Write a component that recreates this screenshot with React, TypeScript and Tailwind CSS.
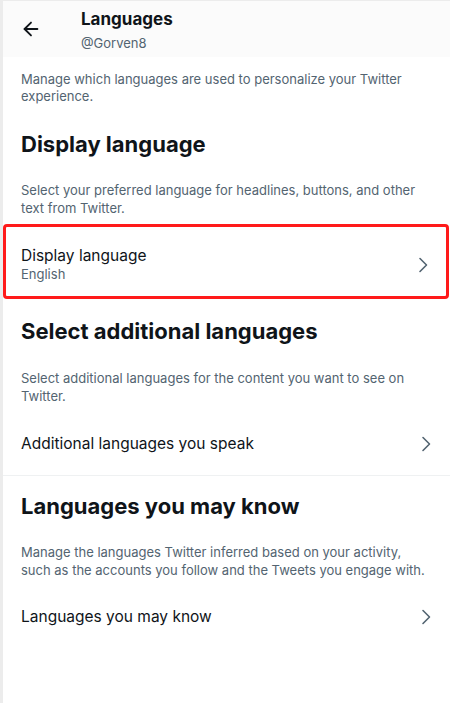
import { ArrowLeft } from "lucide-react";

function Chevron() {
  return (
    <svg width="10" height="16" viewBox="0 0 10 16" fill="none" className="text-[#536471] mr-[1px]">
      <path d="M2 1.5 L8.5 8 L2 14.5" stroke="currentColor" strokeWidth="1.6" strokeLinecap="round" strokeLinejoin="round" />
    </svg>
  );
}

function Row({ title, sub }: { title: string; sub?: string }) {
  return (
    <div className="flex items-center justify-between">
      <div className="flex flex-col">
        <span className="text-[15.5px] leading-[20px] text-[#0f1419]">{title}</span>
        {sub && <span className="text-[13px] leading-[17px] text-[#536471]">{sub}</span>}
      </div>
      <Chevron />
    </div>
  );
}

export default function App() {
  return (
    <div className="w-[450px] h-[703px] bg-white border-l-[3px] border-[#ececec] overflow-hidden font-['Inter',sans-serif]">
      {/* header */}
      <div className="h-[57px] bg-[#fbfbfb] border-t border-[#ececec] flex">
        <div className="w-[78px] flex items-center pl-[17px]">
          <ArrowLeft size={22} strokeWidth={2} className="text-[#0f1419]" />
        </div>
        <div className="pt-[7px] flex flex-col">
          <span className="text-[17px] leading-[22px] font-bold text-[#0f1419]">Languages</span>
          <span className="mt-[3px] text-[13px] leading-[20px] text-[#536471]">@Gorven8</span>
        </div>
      </div>

      <div className="px-[18px]">
        <p className="pt-[14px] text-[13px] leading-[17px] text-[#536471]">
          Manage which languages are used to personalize your Twitter experience.
        </p>

        {/* display language */}
        <h2 className="mt-[25px] text-[22px] leading-[28px] font-bold text-[#0f1419]">Display language</h2>
        <p className="mt-[24px] text-[13px] leading-[17.5px] text-[#536471]">
          Select your preferred language for headlines, buttons, and other text from Twitter.
        </p>
      </div>

      <div className="mt-[7px] mr-[1px] border-[3px] border-[#ff1a1a] rounded-[4px] pl-[15px] pr-[17px] pt-[19px] pb-[13px]">
        <Row title="Display language" sub="English" />
      </div>

      <div className="px-[18px]">
        <h2 className="mt-[18px] text-[22px] leading-[28px] font-bold text-[#0f1419]">Select additional languages</h2>
        <p className="mt-[25px] text-[13px] leading-[17.5px] text-[#536471]">
          Select additional languages for the content you want to see on Twitter.
        </p>
        <div className="pt-[29px] pb-[21px]">
          <Row title="Additional languages you speak" />
        </div>
      </div>

      <div className="h-px bg-[#eff1f2]" />

      <div className="px-[18px]">
        <h2 className="mt-[16px] text-[22px] leading-[28px] font-bold text-[#0f1419]">Languages you may know</h2>
        <p className="mt-[24px] text-[13px] leading-[17.5px] text-[#536471]">
          Manage the languages Twitter inferred based on your activity, such as the accounts you follow and the Tweets you engage with.
        </p>
        <div className="pt-[28px]">
          <Row title="Languages you may know" />
        </div>
      </div>
    </div>
  );
}
